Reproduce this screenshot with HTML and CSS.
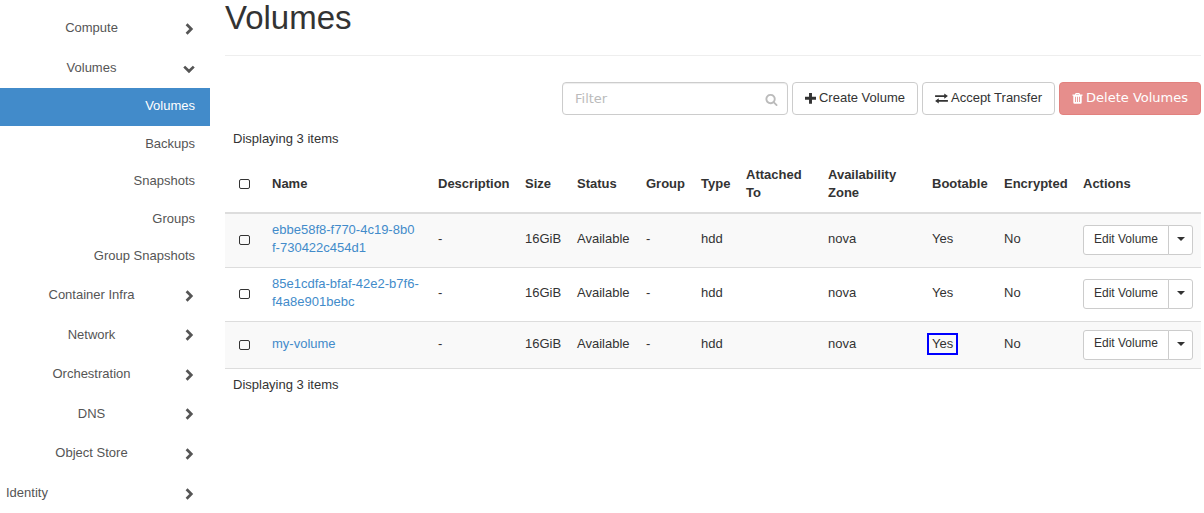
FILE: index.html
```html
<!DOCTYPE html>
<html lang="en">
<head>
<meta charset="utf-8">
<title>Volumes</title>
<link rel="stylesheet" href="styles.css">
</head>
<body>
<svg class="defs" aria-hidden="true">
  <symbol id="chevron" viewBox="0 0 12 12"><path d="M3.600 1.200 8.300 6 3.600 10.800" fill="none" stroke="currentColor" stroke-width="2.700"/></symbol>
  <symbol id="search" viewBox="0 0 1792 1792"><path d="M1216 832q0-185-131.500-316.500t-316.500-131.500-316.500 131.500-131.500 316.500 131.500 316.500 316.500 131.500 316.500-131.500 131.500-316.500zm512 832q0 52-38 90t-90 38q-54 0-90-38l-343-342q-179 124-399 124-143 0-273.500-55.500t-225-150-150-225-55.500-273.500 55.500-273.500 150-225 225-150 273.500-55.500 273.500 55.500 225 150 150 225 55.500 273.500q0 220-124 399l343 343q37 37 37 90z"/></symbol>
  <symbol id="plus" viewBox="0 0 12 12"><path d="M4.400 0h3.200v4.200H12v3.200H7.600v4.200H4.400V7.400H0V4.200h4.400z"/></symbol>
  <symbol id="exchange" viewBox="0 0 14 12"><path d="M0 2.500h10V.5L14 3.400 10 6.300V4.300H0zM14 9.500H4v2L0 8.600 4 5.700v2h10z"/></symbol>
  <symbol id="trash" viewBox="0 0 12 12"><path fill-rule="evenodd" d="M4 0h4l.8 1.700h2.700v1.200h-.9V10q0 1.800-1.300 1.800H2.700Q1.400 11.800 1.400 10V2.900H.5V1.700h2.700zM4.600 1 4.300 1.700h3.400L7.400 1zM3.300 4.200v5.600h.9V4.200zm2.200 0v5.600h.9V4.200zm2.200 0v5.600h.9V4.200z"/></symbol>
</svg>
<div class="layout">
  <nav class="sidebar">
    <a class="group" href="#"><span>Compute</span><svg class="chevron"><use href="#chevron"/></svg></a>
    <a class="group" href="#"><span>Volumes</span><svg class="chevron open"><use href="#chevron"/></svg></a>
    <div class="sub">
      <a class="active" href="#">Volumes</a>
      <a href="#">Backups</a>
      <a href="#">Snapshots</a>
      <a href="#">Groups</a>
      <a href="#">Group Snapshots</a>
    </div>
    <a class="group" href="#"><span>Container Infra</span><svg class="chevron"><use href="#chevron"/></svg></a>
    <a class="group" href="#"><span>Network</span><svg class="chevron"><use href="#chevron"/></svg></a>
    <a class="group" href="#"><span>Orchestration</span><svg class="chevron"><use href="#chevron"/></svg></a>
    <a class="group" href="#"><span>DNS</span><svg class="chevron"><use href="#chevron"/></svg></a>
    <a class="group" href="#"><span>Object Store</span><svg class="chevron"><use href="#chevron"/></svg></a>
    <a class="group root" href="#"><span>Identity</span><svg class="chevron"><use href="#chevron"/></svg></a>
  </nav>
  <main class="content">
    <h1>Volumes</h1>
    <div class="toolbar">
      <div class="filter">
        <input type="text" placeholder="Filter" aria-label="Filter">
        <svg class="icon"><use href="#search"/></svg>
      </div>
      <button class="btn" type="button"><svg class="icon"><use href="#plus"/></svg>Create Volume</button>
      <button class="btn" type="button"><svg class="icon wide"><use href="#exchange"/></svg>Accept Transfer</button>
      <button class="btn danger" type="button" disabled><svg class="icon"><use href="#trash"/></svg>Delete Volumes</button>
    </div>
    <div class="count">Displaying 3 items</div>
    <table class="volumes">
      <colgroup>
        <col class="c-check"><col class="c-name"><col class="c-desc"><col class="c-size"><col class="c-status"><col class="c-group"><col class="c-type"><col class="c-attached"><col class="c-zone"><col class="c-boot"><col class="c-enc"><col class="c-actions">
      </colgroup>
      <thead>
        <tr><th class="check"><input type="checkbox" aria-label="Select all"></th><th>Name</th><th>Description</th><th>Size</th><th>Status</th><th>Group</th><th>Type</th><th>Attached To</th><th>Availability Zone</th><th>Bootable</th><th>Encrypted</th><th>Actions</th></tr>
      </thead>
      <tbody>
        <tr>
          <td class="check"><input type="checkbox" aria-label="Select ebbe58f8"></td>
          <td><a href="#">ebbe58f8-f770-4c19-8b0<br>f-730422c454d1</a></td>
          <td>-</td><td>16GiB</td><td>Available</td><td>-</td><td>hdd</td><td></td><td>nova</td><td>Yes</td><td>No</td>
          <td><div class="split"><button type="button">Edit Volume</button><button class="toggle" type="button" aria-label="More actions"><i class="caret"></i></button></div></td>
        </tr>
        <tr>
          <td class="check"><input type="checkbox" aria-label="Select 85e1cdfa"></td>
          <td><a href="#">85e1cdfa-bfaf-42e2-b7f6-<br>f4a8e901bebc</a></td>
          <td>-</td><td>16GiB</td><td>Available</td><td>-</td><td>hdd</td><td></td><td>nova</td><td>Yes</td><td>No</td>
          <td><div class="split"><button type="button">Edit Volume</button><button class="toggle" type="button" aria-label="More actions"><i class="caret"></i></button></div></td>
        </tr>
        <tr>
          <td class="check"><input type="checkbox" aria-label="Select my-volume"></td>
          <td><a href="#">my-volume</a></td>
          <td>-</td><td>16GiB</td><td>Available</td><td>-</td><td>hdd</td><td></td><td>nova</td><td><span class="marked">Yes</span></td><td>No</td>
          <td><div class="split"><button type="button">Edit Volume</button><button class="toggle" type="button" aria-label="More actions"><i class="caret"></i></button></div></td>
        </tr>
      </tbody>
    </table>
    <div class="count bottom">Displaying 3 items</div>
  </main>
</div>
</body>
</html>
```

FILE: styles.css
```css
* { box-sizing: border-box; }
body {
  margin: 0;
  background: #fff;
  color: #333;
  font: 13px/1.42857 "Liberation Sans", Arial, sans-serif;
}
a { color: #428bca; text-decoration: none; }
button, input { font: inherit; color: inherit; }
.defs { position: absolute; width: 0; height: 0; }
.layout { display: flex; }

/* Sidebar */
.sidebar { flex: 0 0 210px; padding-top: 9px; }
.sidebar a { color: #555; }
.group {
  display: flex;
  align-items: center;
  padding: 10px 15px 11px 0;
}
.group span { flex: 1; text-align: center; }
.group.root span { padding-left: 6px; text-align: left; }
.chevron { width: 12px; height: 12px; margin-top: 1px; }
.chevron.open { margin-top: 3px; transform: rotate(90deg); }
.sub a {
  display: block;
  padding: 9px 15px 10px;
  text-align: right;
}
.sub .active { background: #428bca; color: #fff; }

/* Main column */
.content { flex: 1; min-width: 0; padding: 0 3px 0 15px; }
h1 {
  margin: 0 0 26px;
  padding-bottom: 20px;
  border-bottom: 1px solid #eee;
  font-size: 33px;
  font-weight: 400;
  line-height: 35px;
}
.toolbar { display: flex; justify-content: flex-end; gap: 4px; }
.filter { position: relative; width: 226px; }
.filter input {
  width: 100%;
  height: 33px;
  padding: 6px 12px;
  border: 1px solid #ccc;
  border-radius: 4px;
  box-shadow: inset 0 1px 1px rgba(0, 0, 0, .075);
  background: #fff;
  font-family: "DejaVu Sans", sans-serif;
}
.filter input::placeholder { color: #bbb; opacity: 1; }
.filter .icon { position: absolute; right: 10px; top: 11px; width: 13px; height: 13px; color: #bbb; }
.icon { width: 11px; height: 11px; flex: none; fill: currentColor; }
.icon.wide { width: 13px; }
.btn {
  display: flex;
  align-items: center;
  gap: 3px;
  height: 33px;
  padding: 0 12px 1px;
  border: 1px solid #ccc;
  border-radius: 4px;
  background: #fff;
  white-space: nowrap;
}
.btn.danger {
  padding: 0 12px;
  border-color: #d43f3a;
  background: #d9534f;
  color: #fff;
  font-family: "DejaVu Sans", sans-serif;
  opacity: .65;
}
.count { padding: 15px 8px 8px; }
.count.bottom { padding-top: 7px; }

/* Table */
.volumes {
  width: 100%;
  table-layout: fixed;
  border-collapse: collapse;
  border-bottom: 1px solid #ddd;
}
.c-check { width: 39px; }
.c-name { width: 166px; }
.c-desc { width: 87px; }
.c-size { width: 52px; }
.c-status { width: 69px; }
.c-group { width: 55px; }
.c-type { width: 45px; }
.c-attached { width: 82px; }
.c-zone { width: 104px; }
.c-boot { width: 72px; }
.c-enc { width: 79px; }
.c-actions { width: 126px; }
.volumes th { padding: 9px 8px; border-bottom: 2px solid #ddd; text-align: left; vertical-align: middle; }
.volumes td { padding: 7px 8px 9px; border-top: 1px solid #ddd; vertical-align: middle; }
.volumes td:last-child { padding: 8px; }
.volumes tbody tr:nth-child(odd) { background: #f9f9f9; }
.volumes .check { padding: 8px 0 8px 14px; }
.check input {
  display: block;
  appearance: none;
  width: 11px;
  height: 10px;
  margin: 0;
  border: 1px solid #333;
  border-radius: 2px;
}
.split { display: flex; width: 110px; }
.split button {
  flex: 1;
  height: 30px;
  padding: 0 0 2px;
  border: 1px solid #ccc;
  border-radius: 3px 0 0 3px;
  background: #fff;
  font-size: 12px;
}
.split .toggle {
  flex: 0 0 25px;
  display: flex;
  align-items: center;
  justify-content: center;
  margin-left: -1px;
  border-radius: 0 3px 3px 0;
}
.caret { border: 4px solid transparent; border-top-color: #333; border-bottom: 0; }
.marked { position: relative; display: inline-block; line-height: 14px; }
.marked::after {
  content: "";
  position: absolute;
  inset: -4px -5px;
  border: 2px solid #00f;
}
```
